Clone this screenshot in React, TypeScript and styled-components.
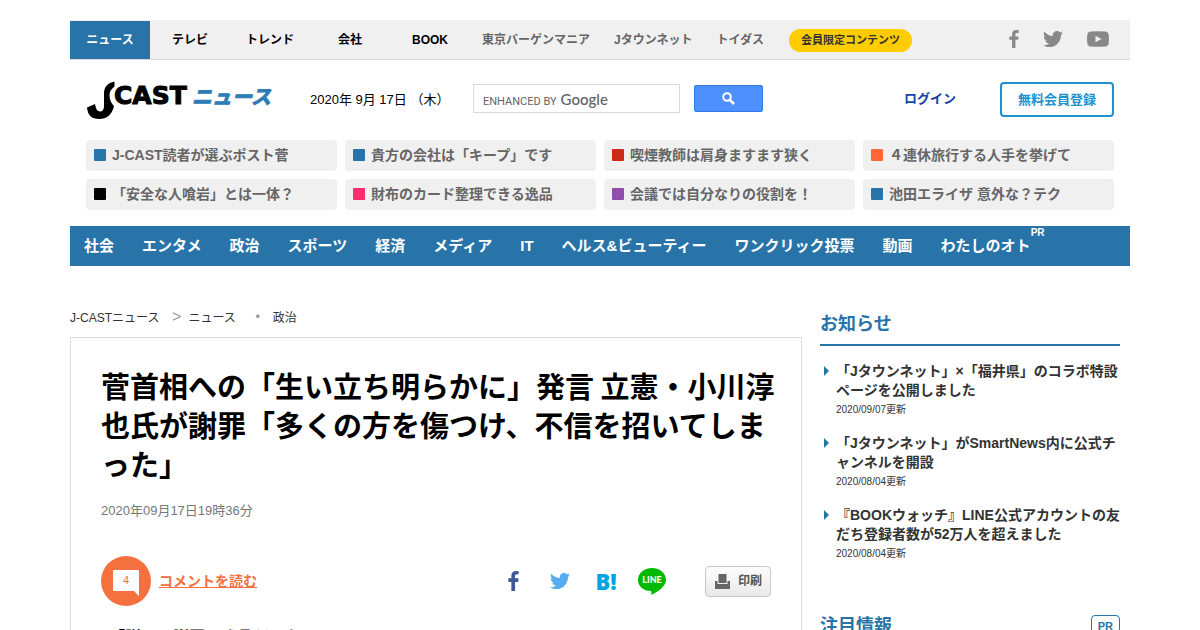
import React from "react";
import styled, { createGlobalStyle } from "styled-components";
import { FaTwitter } from "react-icons/fa";

const BLUE = "#2874a8";
const ORANGE = "#f4713f";

const GlobalStyle = createGlobalStyle`
  *, *::before, *::after { box-sizing: border-box; }
  body {
    margin: 0;
    background: #fff;
    color: #333;
    font-family: "Liberation Sans", "Noto Sans CJK JP", sans-serif;
    font-size: 14px;
    line-height: 20px;
  }
  a { color: inherit; text-decoration: none; }
  ul, ol { list-style: none; margin: 0; padding: 0; }
  h1, h2, p { margin: 0; }
  button, input { font-family: inherit; }
`;

const Page = styled.div`
  width: 100%;
  max-width: 1060px;
  margin: 0 auto;
  padding-top: 20px;
`;

const SiteBar = styled.nav`
  display: flex;
  align-items: stretch;
  height: 40px;
  padding-top: 1px;
  background: #f0f0f0;
  border-bottom: 1px solid #d8d8d8;
  font-size: 12px;
  font-weight: bold;
`;

const SiteTab = styled.a<{ $active?: boolean }>`
  display: flex;
  align-items: center;
  justify-content: center;
  width: 80px;
  color: ${(p) => (p.$active ? "#fff" : "#000")};
  background: ${(p) => (p.$active ? BLUE : "transparent")};
`;

const SisterLink = styled.a`
  display: flex;
  align-items: center;
  padding: 0 12px;
  color: #666;
`;

const MemberPill = styled.a`
  align-self: center;
  margin-left: 13px;
  padding: 0 12px;
  border-radius: 12px;
  background: #fc0;
  color: #333;
  font-size: 11px;
  line-height: 23px;
`;

const SocialLinks = styled.div`
  display: flex;
  align-items: center;
  gap: 24px;
  margin-left: auto;
  padding: 0 21px 2px 0;
  color: #888;
  a { display: flex; }
`;

const Masthead = styled.header`
  display: flex;
  align-items: center;
  height: 80px;
  padding: 0 16px;
`;

const LogoLink = styled.a`
  display: flex;
  width: 188px;
`;

const Today = styled.time`
  width: 163px;
  margin-left: 36px;
  color: #000;
  font-size: 13px;
  white-space: pre;
`;

const SearchForm = styled.form`
  display: flex;
  align-items: center;
  gap: 14px;
  margin-bottom: 3px;
`;

const SearchField = styled.label`
  position: relative;
  display: block;
`;

const SearchInput = styled.input`
  display: block;
  width: 207px;
  height: 29px;
  padding: 0 9px;
  border: 1px solid #d9d9d9;
  background: transparent;
`;

const SearchMark = styled.span`
  position: absolute;
  inset: 0;
  display: flex;
  align-items: baseline;
  gap: 4px;
  padding: 5px 10px;
  color: #5f6368;
  font: 11px/20px Roboto, sans-serif;
  pointer-events: none;
  b { font: 500 15px/20px Lato, sans-serif; }
`;

const SearchButton = styled.button`
  display: flex;
  align-items: center;
  justify-content: center;
  width: 69px;
  height: 27px;
  padding: 0;
  border: 1px solid #3079ed;
  border-radius: 2px;
  background: #4d90fe;
`;

const Account = styled.div`
  display: flex;
  align-items: center;
  gap: 44px;
  margin: 0 0 2px auto;
  font-size: 13px;
  font-weight: bold;
`;

const Login = styled.a`
  color: #0f43a8;
`;

const Register = styled.a`
  padding: 0 16px;
  border: 2px solid #2191cb;
  border-radius: 4px;
  color: #2191cb;
  line-height: 31px;
`;

const Topics = styled.ul`
  display: grid;
  grid-template-columns: repeat(4, 1fr);
  gap: 8px;
  padding: 0 16px 16px;
`;

const Topic = styled.a<{ $color: string }>`
  display: flex;
  align-items: center;
  gap: 6px;
  height: 31px;
  padding: 0 8px 1px;
  border-radius: 4px;
  background: #f0f0f0;
  color: #666;
  font-weight: bold;
  white-space: nowrap;
  &::before {
    content: "";
    width: 12px;
    height: 12px;
    border-radius: 1px;
    background: ${(p) => p.$color};
  }
`;

const MainNav = styled.nav`
  display: flex;
  height: 40px;
  background: ${BLUE};
  color: #fff;
  font-size: 15px;
  font-weight: bold;
  line-height: 40px;
  a { position: relative; padding: 0 14px; white-space: nowrap; }
`;

const NavPr = styled.span`
  position: absolute;
  top: 1px;
  right: 0;
  font-size: 10px;
  line-height: 12px;
`;

const Columns = styled.div`
  display: grid;
  grid-template-columns: minmax(0, 1fr) 300px;
  gap: 18px;
  padding: 40px 10px 0 0;
`;

const Breadcrumb = styled.ol`
  display: flex;
  align-items: center;
  height: 31px;
  padding-bottom: 8px;
  font-size: 12px;
`;

const Separator = styled.li<{ $wide?: boolean }>`
  display: flex;
  justify-content: flex-end;
  width: ${(p) => (p.$wide ? 37 : 29)}px;
  padding: 0 7px 2px 0;
  color: #999;
  font-size: 16px;
`;

const Article = styled.article`
  padding: 28px 30px 30px;
  border: 1px solid #d9d9d9;
`;

const Headline = styled.h1`
  margin-right: -5px;
  color: #000;
  font: bold 29px/39px "Noto Sans CJK JP", sans-serif;
`;

const Published = styled.p`
  margin-top: 18px;
  color: #777;
  font-size: 13px;
`;

const Actions = styled.div`
  display: flex;
  align-items: center;
  margin-top: 35px;
`;

const Comments = styled.a`
  display: flex;
  align-items: center;
  gap: 8px;
  margin-right: auto;
  color: ${ORANGE};
  font-weight: bold;
`;

const ShareList = styled.ul`
  display: flex;
  align-items: center;
  margin-right: 30px;
  li { display: flex; justify-content: center; width: 46px; }
`;

const ShareLink = styled.a<{ $color?: string }>`
  display: flex;
  color: ${(p) => p.$color ?? "inherit"};
  font: 800 22px/24px "Open Sans", sans-serif;
`;

const PrintButton = styled.button`
  display: flex;
  align-items: center;
  gap: 8px;
  height: 31px;
  padding: 0 8px 0 9px;
  border: 1px solid #c8c8c8;
  border-radius: 4px;
  background: linear-gradient(#fdfdfd, #e9e9e9);
  color: #555;
  font-size: 12px;
  font-weight: bold;
  line-height: 20px;
`;

const Lead = styled.p`
  margin-top: 18px;
  color: #000;
  font-size: 16px;
  font-weight: bold;
  line-height: 28px;
`;

const Sidebar = styled.aside`
  padding-top: 3px;
`;

const SideHeading = styled.h2`
  display: flex;
  align-items: center;
  justify-content: space-between;
  height: 37px;
  padding-bottom: 5px;
  border-bottom: 2px solid ${BLUE};
  color: ${BLUE};
  font-size: 18px;
`;

const PrBadge = styled.span`
  padding: 0 6px;
  border: 1px solid ${BLUE};
  border-radius: 4px;
  font-size: 11px;
  line-height: 20px;
`;

const Notices = styled.ul`
  display: grid;
  gap: 14px;
  padding: 16px 0 47px;
`;

const Notice = styled.li`
  position: relative;
  padding-left: 16px;
  &::before {
    content: "";
    position: absolute;
    left: 4px;
    top: 4px;
    border: solid transparent;
    border-width: 5px 0 5px 5px;
    border-left-color: ${BLUE};
  }
  a { display: block; margin-right: -4px; font-weight: bold; line-height: 19px; }
  time { display: block; font-size: 10px; line-height: 20px; }
`;

const Logo = () => (
  <svg width="188" height="42" viewBox="0 0 188 42" role="img" aria-label="J-CAST ニュース">
    <path
      d="M28.500 2.500 Q18 5 18 13 V27 Q18 32.500 14 32.500 Q10 32.500 9 25 L1 28.500 Q2 40 13 40 Q25 40 28 27 Q23.500 22.500 23.500 16.500 Q23.500 11 28.500 7.500 Z"
      fill="#000"
    />
    <text x="28" y="25" fontFamily="DejaVu Sans" fontWeight="bold" fontSize="25" stroke="#000" strokeWidth="1">
      CAST
    </text>
    <text x="106" y="25" fontFamily="Noto Sans CJK JP" fontWeight="bold" fontStyle="italic" fontSize="20" fill="#2d7db4" stroke="#2d7db4" strokeWidth="1">
      ニュース
    </text>
  </svg>
);

const FacebookMark = ({ height }: { height: number }) => (
  <svg height={height} width={height / 2 + 1} viewBox="479 0 864 1664" fill="currentColor" aria-hidden="true">
    <path d="M1343 12v264h-157q-86 0-116 36t-30 108v189h293l-39 296h-254v759h-306v-759h-255v-296h255v-218q0-186 104-288.500t277-102.500q147 0 228 12z" />
  </svg>
);

const YouTubeMark = () => (
  <svg width="22" height="16" viewBox="0 0 22 16" fill="currentColor" aria-hidden="true">
    <path fillRule="evenodd" d="M4 .5 Q11 0 18 .5 Q21.500 .8 21.700 4 Q22.200 8 21.700 12 Q21.500 15.200 18 15.500 Q11 16 4 15.500 Q.5 15.200 .3 12 Q-.2 8 .3 4 Q.5 .8 4 .5 Z M8.500 4.700 V11.300 L14.500 8 Z" />
  </svg>
);

const topics: [string, string][] = [
  ["J-CAST読者が選ぶポスト菅", BLUE],
  ["貴方の会社は「キープ」です", BLUE],
  ["喫煙教師は肩身ますます狭く", "#cb2a17"],
  ["４連休旅行する人手を挙げて", "#ff6737"],
  ["「安全な人喰岩」とは一体？", "#000"],
  ["財布のカード整理できる逸品", "#fa2c70"],
  ["会議では自分なりの役割を！", "#8f4eae"],
  ["池田エライザ 意外な？テク", BLUE],
];

const sections = [
  "社会", "エンタメ", "政治", "スポーツ", "経済", "メディア", "IT",
  "ヘルス&ビューティー", "ワンクリック投票", "動画",
];

const notices: [string, string][] = [
  ["「Jタウンネット」×「福井県」のコラボ特設ページを公開しました", "2020/09/07更新"],
  ["「Jタウンネット」がSmartNews内に公式チャンネルを開設", "2020/08/04更新"],
  ["『BOOKウォッチ』LINE公式アカウントの友だち登録者数が52万人を超えました", "2020/08/04更新"],
];

export default function App() {
  return (
    <>
      <GlobalStyle />
      <Page>
        <SiteBar>
          {["ニュース", "テレビ", "トレンド", "会社", "BOOK"].map((name, i) => (
            <SiteTab key={name} href="#" $active={i === 0}>{name}</SiteTab>
          ))}
          {["東京バーゲンマニア", "Jタウンネット", "トイダス"].map((name) => (
            <SisterLink key={name} href="#">{name}</SisterLink>
          ))}
          <MemberPill href="#">会員限定コンテンツ</MemberPill>
          <SocialLinks>
            <a href="#" aria-label="Facebook"><FacebookMark height={18} /></a>
            <a href="#" aria-label="Twitter"><FaTwitter size={20} /></a>
            <a href="#" aria-label="YouTube"><YouTubeMark /></a>
          </SocialLinks>
        </SiteBar>

        <Masthead>
          <LogoLink href="#"><Logo /></LogoLink>
          <Today>2020年 9月 17日 （木）</Today>
          <SearchForm>
            <SearchField>
              <SearchInput type="text" aria-label="検索" />
              <SearchMark>ENHANCED BY <b>Google</b></SearchMark>
            </SearchField>
            <SearchButton type="button" aria-label="検索する">
              <svg width="13" height="13" viewBox="0 0 13 13" fill="none" stroke="#fff" strokeWidth="2">
                <circle cx="5" cy="5" r="3.800" />
                <path d="M7.800 7.800 L12 12" strokeWidth="2.600" />
              </svg>
            </SearchButton>
          </SearchForm>
          <Account>
            <Login href="#">ログイン</Login>
            <Register href="#">無料会員登録</Register>
          </Account>
        </Masthead>

        <Topics>
          {topics.map(([title, color]) => (
            <li key={title}><Topic href="#" $color={color}>{title}</Topic></li>
          ))}
        </Topics>

        <MainNav>
          {sections.map((name) => <a key={name} href="#">{name}</a>)}
          <a href="#">わたしのオト<NavPr>PR</NavPr></a>
        </MainNav>

        <Columns>
          <main>
            <Breadcrumb>
              <li><a href="#">J-CASTニュース</a></li>
              <Separator>&gt;</Separator>
              <li><a href="#">ニュース</a></li>
              <Separator $wide>・</Separator>
              <li><a href="#">政治</a></li>
            </Breadcrumb>
            <Article>
              <Headline>菅首相への「生い立ち明らかに」発言 立憲・小川淳也氏が謝罪「多くの方を傷つけ、不信を招いてしまった」</Headline>
              <Published>2020年09月17日19時36分</Published>
              <Actions>
                <Comments href="#">
                  <svg width="50" height="50" viewBox="0 0 50 50" aria-hidden="true">
                    <circle cx="25" cy="25" r="25" fill={ORANGE} />
                    <path d="M13 14 H37 Q38 14 38 15 V40 L33 35 H13 Q12 35 12 34 V15 Q12 14 13 14 Z" fill="#fff" />
                    <text x="25" y="28" textAnchor="middle" fontSize="11" fontWeight="normal" fill={ORANGE}>4</text>
                  </svg>
                  <u>コメントを読む</u>
                </Comments>
                <ShareList>
                  <li><ShareLink href="#" aria-label="Facebook" $color="#3b5998"><FacebookMark height={20} /></ShareLink></li>
                  <li><ShareLink href="#" aria-label="Twitter" $color="#55acee"><FaTwitter size={20} /></ShareLink></li>
                  <li><ShareLink href="#" aria-label="はてなブックマーク" $color="#00a4de">B!</ShareLink></li>
                  <li>
                    <ShareLink href="#" aria-label="LINE">
                      <svg width="28" height="27" viewBox="0 0 28 27">
                        <path d="M14 0 C22 0 28 5 28 12 C28 18 20 24 13 27 Q14 25 13 23 C5 23 0 18 0 12 C0 5 6 0 14 0 Z" fill="#00b900" />
                        <text x="14" y="15" textAnchor="middle" fontFamily="Lato" fontWeight="900" fontSize="9" fill="#fff">LINE</text>
                      </svg>
                    </ShareLink>
                  </li>
                </ShareList>
                <PrintButton type="button">
                  <svg width="15" height="15" viewBox="0 0 15 15" fill="#666" aria-hidden="true">
                    <path d="M3.500 0 H11.500 V9 H3.500 Z M0 7 H2.500 V10 H12.500 V7 H15 V15 H0 Z" />
                  </svg>
                  印刷
                </PrintButton>
              </Actions>
              <Lead>　「説明・謝罪の発言だった」</Lead>
            </Article>
          </main>

          <Sidebar>
            <SideHeading>お知らせ</SideHeading>
            <Notices>
              {notices.map(([title, date]) => (
                <Notice key={title}>
                  <a href="#">{title}</a>
                  <time>{date}</time>
                </Notice>
              ))}
            </Notices>
            <SideHeading>注目情報<PrBadge>PR</PrBadge></SideHeading>
          </Sidebar>
        </Columns>
      </Page>
    </>
  );
}
